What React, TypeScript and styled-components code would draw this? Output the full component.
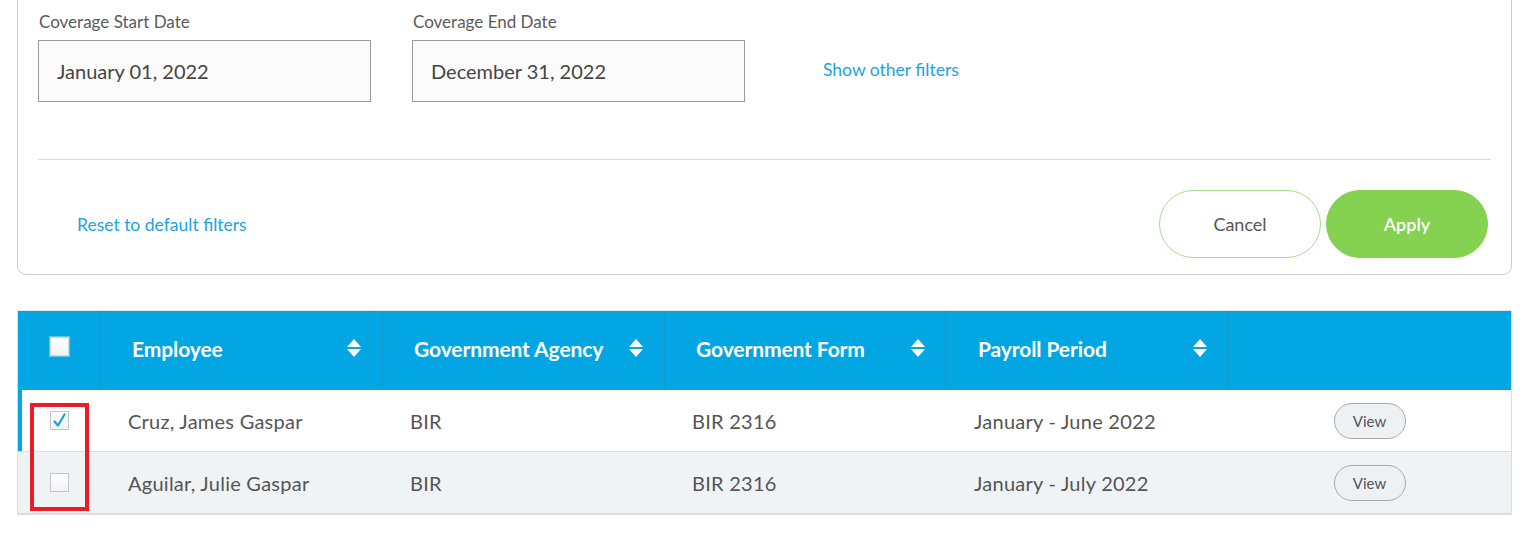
import React from 'react'
import styled, { createGlobalStyle } from 'styled-components'

const GlobalStyle = createGlobalStyle`
  body {
    margin: 0;
    background: #ffffff;
    font-family: Lato, "Open Sans", "Liberation Sans", sans-serif;
    color: #555555;
  }
`

const Page = styled.div`
  width: 1533px;
  height: 533px;
  overflow: hidden;
`

const FilterCard = styled.div`
  margin: -20px 0 0 17px;
  width: 1495px;
  box-sizing: border-box;
  border: 1px solid #cccccc;
  border-radius: 0 0 9px 9px;
  padding: 31px 20px 16px 20px;
  background: #ffffff;
`

const FilterRow = styled.div`
  display: flex;
  align-items: flex-end;
  gap: 41px;
`

const Field = styled.div`
  display: flex;
  flex-direction: column;
  gap: 8px;
`

const FieldLabel = styled.label`
  font-size: 17px;
  line-height: 20px;
  color: #5b5b5b;
  padding-left: 1px;
`

const DateInput = styled.div`
  width: 333px;
  height: 62px;
  box-sizing: border-box;
  border: 1px solid #9a9a9a;
  background: #fbfbfb;
  display: flex;
  align-items: center;
  padding-left: 18px;
  font-size: 20px;
  color: #454545;
`

const LinkText = styled.a<{ $indent?: number }>`
  color: #1ba4e1;
  font-size: 17.5px;
  cursor: pointer;
  text-decoration: none;
  margin-left: ${p => p.$indent ?? 0}px;
`

const ShowFilters = styled.div`
  height: 62px;
  display: flex;
  align-items: center;
  padding-left: 37px;
  padding-bottom: 4px;
  box-sizing: border-box;
`

const Divider = styled.hr`
  margin: 57px 0 0 0;
  border: none;
  border-top: 1px solid #d9d9d9;
`

const ActionRow = styled.div`
  margin-top: 30px;
  display: flex;
  align-items: center;
  justify-content: space-between;
  padding-right: 3px;
`

const Buttons = styled.div`
  display: flex;
  gap: 5px;
`

const PillButton = styled.button<{ $primary?: boolean }>`
  width: 162px;
  height: 68px;
  border-radius: 34px;
  font-family: inherit;
  font-size: 18px;
  cursor: pointer;
  border: 1px solid ${p => (p.$primary ? '#84d24f' : '#a9dd8a')};
  background: ${p => (p.$primary ? '#84d24f' : '#ffffff')};
  color: ${p => (p.$primary ? '#ffffff' : '#555555')};
  font-weight: ${p => (p.$primary ? 600 : 400)};
`

const TableWrap = styled.div`
  position: relative;
  margin: 35px 0 0 17px;
  width: 1495px;
  box-sizing: border-box;
  border: 1px solid #dddddd;
  border-top: 1px solid #e3e3e3;
`

const GridRow = styled.div<{ $selected?: boolean; $alt?: boolean }>`
  display: grid;
  grid-template-columns: 82px repeat(4, 282px) 1fr;
  height: 62px;
  box-sizing: border-box;
  border-bottom: 1px solid #dddddd;
  background: ${p => (p.$alt ? '#f0f3f6' : '#ffffff')};
  box-shadow: ${p => (p.$selected ? 'inset 4px 0 0 #05a6e3' : 'none')};
  &:last-child {
    border-bottom: none;
  }
`

const HeaderRow = styled(GridRow)`
  height: 79px;
  background: #02a6e3;
  border-bottom: none;
`

const HeadCell = styled.div<{ $first?: boolean }>`
  display: flex;
  align-items: center;
  justify-content: ${p => (p.$first ? 'center' : 'space-between')};
  padding: ${p => (p.$first ? '0 0 9px 0' : '0 20px 5px 31px')};
  border-left: ${p => (p.$first ? 'none' : '1px solid #1199d0')};
  color: #ffffff;
  font-weight: 700;
  font-size: 21px;
  letter-spacing: -0.1px;
`

const Cell = styled.div<{ $center?: boolean }>`
  display: flex;
  align-items: center;
  justify-content: ${p => (p.$center ? 'center' : 'flex-start')};
  padding-left: ${p => (p.$center ? 0 : 28)}px;
  font-size: 20px;
  letter-spacing: 0.25px;
  color: #555555;
`

const Check = styled.span<{ $header?: boolean }>`
  width: 19px;
  height: 19px;
  box-sizing: border-box;
  border: 1px solid ${p => (p.$header ? '#d6d6d6' : '#c2c6ca')};
  background: linear-gradient(#ffffff, #f3f3f3);
  display: inline-flex;
  align-items: center;
  justify-content: center;
  box-shadow: ${p => (p.$header ? '0 0 0 1px rgba(255,255,255,0.35)' : 'none')};
`

const ViewButton = styled.button`
  width: 72px;
  height: 36px;
  border-radius: 18px;
  border: 1px solid #a9a9a9;
  background: #eef1f4;
  color: #555555;
  font-family: inherit;
  font-size: 15px;
  cursor: pointer;
`

const Annotation = styled.div`
  position: absolute;
  left: 12px;
  top: 92px;
  width: 59px;
  height: 108px;
  box-sizing: border-box;
  border: 4px solid #e81d25;
  pointer-events: none;
`

const SortIcon = () => (
  <svg width="16" height="20" viewBox="0 0 16 20">
    <path d="M8 1 L15 9 L1 9 Z" fill="#ffffff" />
    <path d="M1 11 L15 11 L8 19 Z" fill="#ffffff" />
  </svg>
)

const CheckMark = () => (
  <svg width="15" height="15" viewBox="0 0 15 15">
    <path d="M2.5 8.5 L6 12.5 L12.5 1.5" fill="none" stroke="#1a9fe0" strokeWidth="2.2" strokeLinecap="round" strokeLinejoin="round" />
  </svg>
)

const columns = ['Employee', 'Government Agency', 'Government Form', 'Payroll Period']

const rows = [
  { name: 'Cruz, James Gaspar', agency: 'BIR', form: 'BIR 2316', period: 'January - June 2022', checked: true },
  { name: 'Aguilar, Julie Gaspar', agency: 'BIR', form: 'BIR 2316', period: 'January - July 2022', checked: false },
]

export default function App(): JSX.Element {
  return (
    <Page>
      <GlobalStyle />
      <FilterCard>
        <FilterRow>
          <Field>
            <FieldLabel>Coverage Start Date</FieldLabel>
            <DateInput>January 01, 2022</DateInput>
          </Field>
          <Field>
            <FieldLabel>Coverage End Date</FieldLabel>
            <DateInput>December 31, 2022</DateInput>
          </Field>
          <ShowFilters>
            <LinkText>Show other filters</LinkText>
          </ShowFilters>
        </FilterRow>
        <Divider />
        <ActionRow>
          <LinkText $indent={39}>Reset to default filters</LinkText>
          <Buttons>
            <PillButton>Cancel</PillButton>
            <PillButton $primary>Apply</PillButton>
          </Buttons>
        </ActionRow>
      </FilterCard>

      <TableWrap>
        <HeaderRow>
          <HeadCell $first>
            <Check $header />
          </HeadCell>
          {columns.map(c => (
            <HeadCell key={c}>
              <span>{c}</span>
              <SortIcon />
            </HeadCell>
          ))}
          <HeadCell />
        </HeaderRow>
        {rows.map((r, i) => (
          <GridRow key={r.name} $selected={r.checked} $alt={i % 2 === 1}>
            <Cell $center>
              <Check>{r.checked && <CheckMark />}</Check>
            </Cell>
            <Cell>{r.name}</Cell>
            <Cell>{r.agency}</Cell>
            <Cell>{r.form}</Cell>
            <Cell>{r.period}</Cell>
            <Cell $center>
              <ViewButton>View</ViewButton>
            </Cell>
          </GridRow>
        ))}
        <Annotation />
      </TableWrap>
    </Page>
  )
}
